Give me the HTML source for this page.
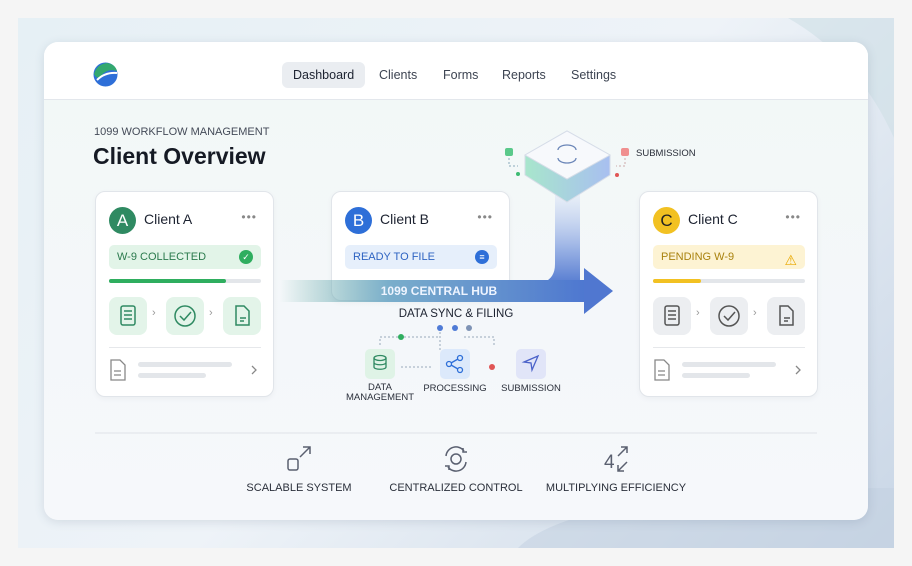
<!DOCTYPE html>
<html><head><meta charset="utf-8"><style>
*{margin:0;padding:0;box-sizing:border-box}
body{width:912px;height:566px;background:#f5f5f5;font-family:"Liberation Sans",sans-serif;position:relative;overflow:hidden;color:#1c2230}
.abs{position:absolute}
.bg{left:18px;top:18px;width:876px;height:530px;background:linear-gradient(135deg,#e6f0f5 0%,#eef3f8 50%,#c9d6e6 100%);overflow:hidden}
.main{left:44px;top:42px;width:824px;height:478px;border-radius:14px;background:linear-gradient(180deg,#f2f8f6,#f4f7fa 60%,#f6f8fb);box-shadow:0 2px 10px rgba(60,80,110,.15);overflow:hidden}
.nav{left:0;top:0;width:824px;height:58px;background:#fff;border-bottom:1px solid #e3e7ec}
.nav span{position:absolute;top:26px;font-size:12.5px;color:#3d4452}
.card{background:#fff;border:1px solid #e1e5ea;border-radius:10px;width:179px;height:206px;box-shadow:0 2px 6px rgba(0,0,0,.04)}
.av{position:absolute;left:13px;top:15px;width:27px;height:27px;border-radius:50%;color:#fff;font-size:17px;text-align:center;line-height:27px}
.cn{position:absolute;left:48px;top:19px;font-size:14px;color:#1c2230}
.dots{position:absolute;right:16px;top:18px;font-size:12px;color:#888;letter-spacing:1px}
.badge{position:absolute;left:13px;top:53px;width:152px;height:24px;border-radius:5px;font-size:11px;line-height:24px;padding-left:8px}
.bar{position:absolute;left:13px;top:87px;width:152px;height:4px;border-radius:2px;background:#e3e6ea}
.tile{position:absolute;top:105px;width:38px;height:38px;border-radius:8px}
.chev{position:absolute;top:115px;font-size:11px;color:#999}
.lbl{font-size:10px;color:#2a2f3a;text-align:center}
</style></head><body>
<div class="abs bg">
<svg class="abs" style="left:0;top:0" width="876" height="530"><path d="M770 0 Q840 40 876 120 L876 0Z" fill="#cfe0e6" opacity=".6"/><path d="M500 530 Q560 470 876 470 L876 530Z" fill="#c2cfe0" opacity=".5"/></svg>
</div>
<div class="abs main">
<div class="abs nav">
 <svg class="abs" style="left:49px;top:20px" width="25" height="25" viewBox="0 0 25 25"><circle cx="12.5" cy="12.5" r="12" fill="#2e6fd8"/><path d="M1 12 Q4 2 14 1 Q22 2 24 9 Q14 6 8 14 Q4 18 1 12Z" fill="#33a86f"/><path d="M4 18 Q12 10 24 11" stroke="#fff" stroke-width="2" fill="none"/></svg>
 <div class="abs" style="left:238px;top:20px;width:83px;height:26px;border-radius:6px;background:#eaedf1"></div>
 <span style="left:249px;color:#1c2230">Dashboard</span>
 <span style="left:335px">Clients</span>
 <span style="left:399px">Forms</span>
 <span style="left:458px">Reports</span>
 <span style="left:527px">Settings</span>
</div>
<div class="abs" style="left:50px;top:84px;font-size:11px;color:#444b58">1099 WORKFLOW MANAGEMENT</div>
<div class="abs" style="left:49px;top:101px;font-size:23px;font-weight:bold;color:#151a24">Client Overview</div>

<!-- Client A -->
<div class="abs card" style="left:51px;top:149px">
 <div class="av" style="background:#2f8a62">A</div><div class="cn">Client A</div><div class="dots">•••</div>
 <div class="badge" style="background:#e2f4e8;color:#2b7a4d">W-9 COLLECTED<span style="position:absolute;right:8px;top:5px;width:14px;height:14px;border-radius:50%;background:#2fae5f;color:#fff;font-size:9px;line-height:14px;text-align:center">✓</span></div>
 <div class="bar"><div style="width:117px;height:4px;border-radius:2px;background:#2fae5f"></div></div>
 <div class="tile" style="left:13px;background:#e3f4e9"></div><div class="chev" style="left:56px">›</div>
 <div class="tile" style="left:70px;background:#e3f4e9"></div><div class="chev" style="left:113px">›</div>
 <div class="tile" style="left:127px;background:#e3f4e9"></div>
 <svg class="abs" style="left:13px;top:105px" width="152" height="38" fill="none" stroke="#2f8a62" stroke-width="1.5"><rect x="12" y="9" width="14" height="19" rx="2"/><path d="M15 14h8M15 18h8M15 22h8"/><circle cx="76" cy="19" r="10"/><path d="M71 19l4 4 7-8"/><path d="M127 9h8l5 5v14h-13z M131 21h6M131 24h4"/></svg>
 <div class="abs" style="left:13px;top:155px;width:152px;height:1px;background:#e6e8eb"></div>
 <svg class="abs" style="left:13px;top:166px" width="152" height="24" fill="none" stroke="#888" stroke-width="1.3"><path d="M2 2h9l5 5v15H2z M5 13h7M5 17h7"/><path d="M143 8l4 4-4 4"/></svg>
 <div class="abs" style="left:42px;top:170px;width:94px;height:5px;border-radius:3px;background:#e3e6ea"></div>
 <div class="abs" style="left:42px;top:181px;width:68px;height:5px;border-radius:3px;background:#e3e6ea"></div>
</div>

<!-- Client B -->
<div class="abs card" style="left:287px;top:149px;height:110px">
 <div class="av" style="background:#2e6fd8">B</div><div class="cn">Client B</div><div class="dots">•••</div>
 <div class="badge" style="background:#e6effb;color:#2e63c2">READY TO FILE<span style="position:absolute;right:8px;top:5px;width:14px;height:14px;border-radius:50%;background:#2e6fd8;color:#fff;font-size:9px;line-height:14px;text-align:center">≡</span></div>
</div>

<!-- Client C -->
<div class="abs card" style="left:595px;top:149px">
 <div class="av" style="background:#f2c122;color:#222">C</div><div class="cn">Client C</div><div class="dots">•••</div>
 <div class="badge" style="background:#fdf3d3;color:#a9820f">PENDING W-9<span style="position:absolute;right:8px;top:3px;color:#e9a800;font-size:14px">⚠</span></div>
 <div class="bar"><div style="width:48px;height:4px;border-radius:2px;background:#f2c122"></div></div>
 <div class="tile" style="left:13px;background:#eceef1"></div><div class="chev" style="left:56px">›</div>
 <div class="tile" style="left:70px;background:#eceef1"></div><div class="chev" style="left:113px">›</div>
 <div class="tile" style="left:127px;background:#eceef1"></div>
 <svg class="abs" style="left:13px;top:105px" width="152" height="38" fill="none" stroke="#555" stroke-width="1.5"><rect x="12" y="9" width="14" height="19" rx="2"/><path d="M15 14h8M15 18h8M15 22h8"/><circle cx="76" cy="19" r="10"/><path d="M71 19l4 4 7-8"/><path d="M127 9h8l5 5v14h-13z M131 21h6M131 24h4"/></svg>
 <div class="abs" style="left:13px;top:155px;width:152px;height:1px;background:#e6e8eb"></div>
 <svg class="abs" style="left:13px;top:166px" width="152" height="24" fill="none" stroke="#888" stroke-width="1.3"><path d="M2 2h9l5 5v15H2z M5 13h7M5 17h7"/><path d="M143 8l4 4-4 4"/></svg>
 <div class="abs" style="left:42px;top:170px;width:94px;height:5px;border-radius:3px;background:#e3e6ea"></div>
 <div class="abs" style="left:42px;top:181px;width:68px;height:5px;border-radius:3px;background:#e3e6ea"></div>
</div>

<!-- arrow & hub -->
<svg class="abs" style="left:0;top:0" width="824" height="478">
 <defs>
  <linearGradient id="g1" x1="0" x2="1"><stop offset="0" stop-color="#5fa89c" stop-opacity="0"/><stop offset=".35" stop-color="#7aaecb"/><stop offset="1" stop-color="#4d76d0"/></linearGradient>
  <linearGradient id="g2" x1="0" y1="0" x2="0" y2="1"><stop offset="0" stop-color="#e4ecf8" stop-opacity=".6"/><stop offset=".6" stop-color="#9fb6e6"/><stop offset="1" stop-color="#5a7fd2"/></linearGradient>
  <linearGradient id="g3" x1="0" x2="1"><stop offset="0" stop-color="#a8e6cc"/><stop offset="1" stop-color="#a8bff0"/></linearGradient>
 </defs>
 <path d="M511 150 L536 150 L536 240 L500 240 Q511 236 511 222Z" fill="url(#g2)"/>
 <path d="M236 238 L546 238 L546 260 L236 260Z" fill="url(#g1)"/>
 <path d="M540 226 L569 249 L540 272Z" fill="#5077d0"/>
 <path d="M481 113 L523 89 L566 113 L566 133 L523 160 L481 133Z" fill="url(#g3)" stroke="#d6dde8"/>
 <path d="M481 113 L523 89 L566 113 L523 137Z" fill="#f7f9fc" stroke="#d6dde8"/>
 <path d="M514 108 a9 5 0 0 1 18 0 M532 116 a9 5 0 0 1 -18 0" stroke="#6b86b8" stroke-width="1.3" fill="none"/>
 <path d="M465 112 v12 h9" stroke="#8ab" stroke-dasharray="2 2" fill="none"/><rect x="461" y="106" width="8" height="8" rx="2" fill="#5ac98a"/><circle cx="474" cy="132" r="2" fill="#3dbb73"/>
 <path d="M581 112 v12 h-9" stroke="#caa" stroke-dasharray="2 2" fill="none"/><rect x="577" y="106" width="8" height="8" rx="2" fill="#f08f8f"/><circle cx="573" cy="133" r="2" fill="#e05555"/>
 <path d="M336 303 v-8 h60 M396 286 v23 M420 295 h30 v8 M357 325 h30" stroke="#9ab" stroke-dasharray="2 2" fill="none"/>
 <circle cx="357" cy="295" r="3" fill="#2fae5f"/><circle cx="396" cy="286" r="3" fill="#4f7bd6"/><circle cx="411" cy="286" r="3" fill="#4f7bd6"/><circle cx="425" cy="286" r="3" fill="#7e93b5"/><circle cx="448" cy="325" r="3" fill="#e05555"/>
 <rect x="321" y="307" width="30" height="30" rx="5" fill="#dff3e6"/><rect x="396" y="307" width="30" height="30" rx="5" fill="#dce9fb"/><rect x="472" y="307" width="30" height="30" rx="5" fill="#e1e5f8"/>
 <g fill="none" stroke="#2f8a62" stroke-width="1.3"><ellipse cx="336" cy="316" rx="6" ry="2.5"/><path d="M330 316v9c0 3 12 3 12 0v-9M330 320.5c0 3 12 3 12 0"/></g>
 <g fill="none" stroke="#2e6fd8" stroke-width="1.3"><circle cx="405" cy="322" r="2.5"/><circle cx="416" cy="316" r="2.5"/><circle cx="416" cy="328" r="2.5"/><path d="M407 321l7-4M407 323l7 4"/></g>
 <path d="M480 320 l14 -6 -6 14 -1 -7z" fill="none" stroke="#4b62c9" stroke-width="1.3"/>
 <line x1="51" y1="391" x2="773" y2="391" stroke="#dfe3e8"/>
 <g fill="none" stroke="#5a6070" stroke-width="1.5"><rect x="244" y="417" width="10" height="11" rx="2"/><path d="M256 415l10-10M259 405h7v7"/>
 <circle cx="412" cy="417" r="5"/><path d="M402 414a10 10 0 0 1 18-5M422 420a10 10 0 0 1 -18 5M419 406v4h4M405 428v-4h-4"/>
 <path d="M574 414l9-9M577 405h6v6"/><path d="M574 429l9-9M574 423v6h6"/></g>
 <text x="560" y="426" font-size="19" fill="#5a6070" font-family="Liberation Sans">4</text>
</svg>
<div class="abs" style="left:270px;top:242px;width:250px;text-align:center;font-size:12px;color:#eef4ff;font-weight:bold">1099 CENTRAL HUB</div>
<div class="abs" style="left:300px;top:266px;width:224px;text-align:center;font-size:11.5px;color:#1c2230">DATA SYNC &amp; FILING</div>
<div class="abs lbl" style="left:294px;top:341px;width:84px;font-size:9.5px;line-height:10px">DATA<br>MANAGEMENT</div>
<div class="abs lbl" style="left:371px;top:341px;width:80px;font-size:9.5px">PROCESSING</div>
<div class="abs lbl" style="left:447px;top:341px;width:80px;font-size:9.5px">SUBMISSION</div>
<div class="abs" style="left:592px;top:106px;font-size:9.5px;color:#2a2f3a">SUBMISSION</div>
<div class="abs lbl" style="left:190px;top:440px;width:130px;font-size:11px">SCALABLE SYSTEM</div>
<div class="abs lbl" style="left:337px;top:440px;width:150px;font-size:11px">CENTRALIZED CONTROL</div>
<div class="abs lbl" style="left:492px;top:440px;width:160px;font-size:11px">MULTIPLYING EFFICIENCY</div>
</div>
</body></html>
